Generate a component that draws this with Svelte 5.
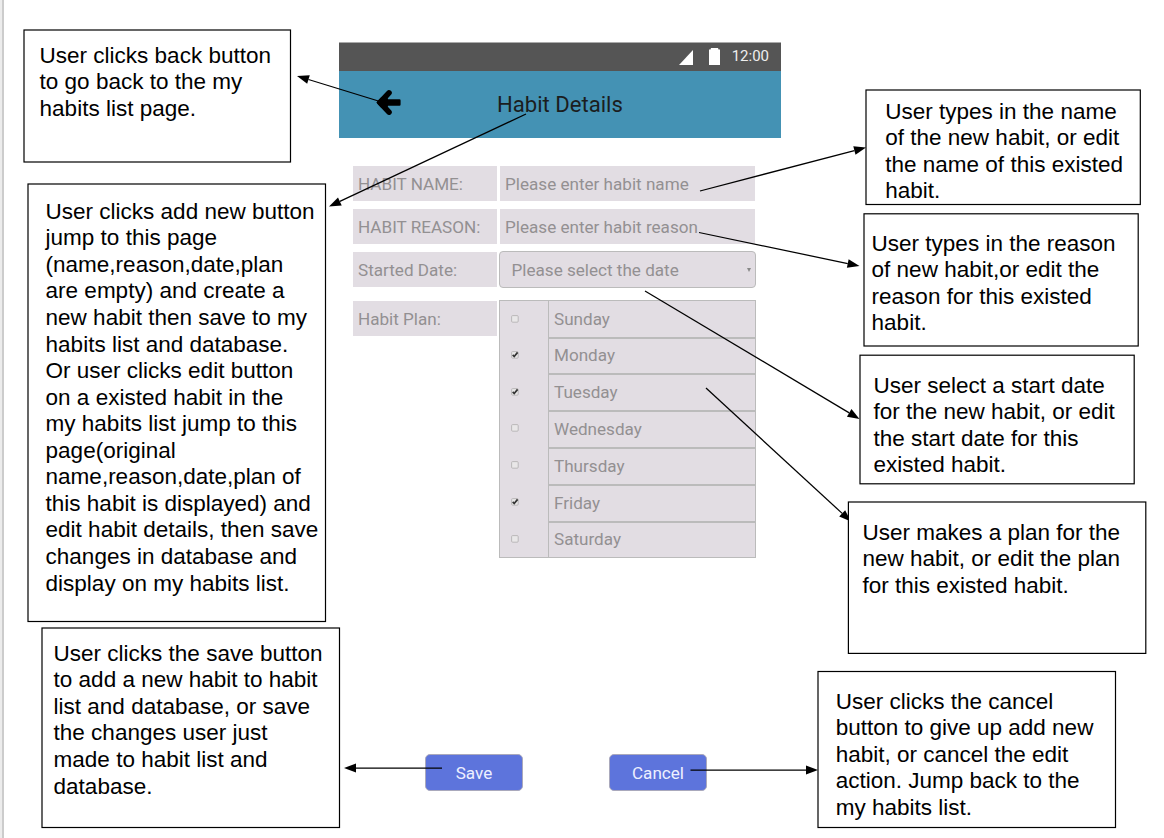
<script>
  const notes = [
    { x: 24, y: 30, w: 266.5, h: 132, tx: 39.6, base: 63, lines: ['User clicks back button', 'to go back to the my', 'habits list page.'] },
    { x: 28, y: 184, w: 297.5, h: 437.5, tx: 45.6, base: 219, lines: ['User clicks add new button', 'jump to this page', '(name,reason,date,plan', 'are empty) and create a', 'new habit then save to my', 'habits list and database.', 'Or user clicks edit button', 'on a existed habit in the', 'my habits list jump to this', 'page(original', 'name,reason,date,plan of', 'this habit is displayed) and', 'edit habit details, then save', 'changes in database and', 'display on my habits list.'] },
    { x: 42, y: 628, w: 297.5, h: 199.5, tx: 53.6, base: 661, lines: ['User clicks the save button', 'to add a new habit to habit', 'list and database, or save', 'the changes user just', 'made to habit list and', 'database.'] },
    { x: 866, y: 90, w: 274.3, h: 114.5, tx: 885.3, base: 119, lines: ['User types in the name', 'of the new habit, or edit', 'the name of this existed', 'habit.'] },
    { x: 864, y: 213.8, w: 274.2, h: 132.2, tx: 871.6, base: 251, lines: ['User types in the reason', 'of new habit,or edit the', 'reason for this existed', 'habit.'] },
    { x: 860, y: 355.2, w: 274.2, h: 128.6, tx: 873.4, base: 393, lines: ['User select a start date', 'for the new habit, or edit', 'the start date for this', 'existed habit.'] },
    { x: 848.4, y: 502, w: 297.4, h: 151.4, tx: 862.4, base: 540, lines: ['User makes a plan for the', 'new habit, or edit the plan', 'for this existed habit.'] },
    { x: 818, y: 671.5, w: 297.5, h: 156, tx: 835.7, base: 709, lines: ['User clicks the cancel', 'button to give up add new', 'habit, or cancel the edit', 'action. Jump back to the', 'my habits list.'] },
  ];

  const arrows = [
    [380, 101.5, 297, 76],
    [526, 114, 329, 206.5],
    [700, 191, 866, 147.5],
    [699, 232.5, 859.5, 266],
    [645, 291, 859.5, 419],
    [706, 388, 851, 521.5],
    [442, 768, 344, 768],
    [690.5, 770, 818, 770],
  ].map(([x1, y1, x2, y2]) => {
    const d = Math.hypot(x2 - x1, y2 - y1);
    const ux = (x2 - x1) / d, uy = (y2 - y1) / d;
    const bx = x2 - ux * 12, by = y2 - uy * 12;
    return { x1, y1, bx, by, head: `${x2},${y2} ${bx - uy * 4.4},${by + ux * 4.4} ${bx + uy * 4.4},${by - ux * 4.4}` };
  });

  const days = [
    ['Sunday', false], ['Monday', true], ['Tuesday', true], ['Wednesday', false],
    ['Thursday', false], ['Friday', true], ['Saturday', false],
  ];
</script>

<main class="canvas">
  <section class="phone">
    <div class="status">
      <svg width="14" height="15" viewBox="0 0 14 15"><path d="M14 0V15H0Z" fill="#fff" /></svg>
      <svg class="battery" width="11" height="17" viewBox="0 0 11 17"><path d="M2 0H9L9.500 1.500H11V17H0V1.500H1.500Z" fill="#fff" /></svg>
      <span>12:00</span>
    </div>
    <header>
      <svg class="back" width="26" height="28" viewBox="0 0 26 28">
        <path d="M14 3.900L5 13.500L14 23.100" fill="none" stroke="#000" stroke-width="5.600" stroke-linecap="round" stroke-linejoin="round" />
        <path d="M6 8.500L1.300 13.500L6 18.500L12 19.500L13 16.700H24.500Q25.600 16.700 25.600 15.500V11.500Q25.600 10.300 24.500 10.300H13L12 7.500Z" />
      </svg>
      <h1>Habit Details</h1>
    </header>
    <div class="form">
      <div class="label">HABIT NAME:</div><div class="input">Please enter habit name</div>
      <div class="label">HABIT REASON:</div><div class="input">Please enter habit reason</div>
      <div class="label">Started Date:</div>
      <div class="select"><span>Please select the date</span><i></i></div>
      <div class="label plan">Habit Plan:</div>
      <div class="table">
        {#each days as [day, on]}
          <div class="row">
            <div class="check">
              <svg width="8" height="8" viewBox="0 0 8 8">
                <rect x=".6" y=".6" width="6.600" height="6.600" rx="1" fill="#e9e7e8" stroke="#b5b3b4" stroke-width=".9" />
                {#if on}<path d="M1.700 3.900L3.200 5.500L6.600 1.400" fill="none" stroke="#333" stroke-width="1.700" />{/if}
              </svg>
            </div>
            <div class="day">{day}</div>
          </div>
        {/each}
      </div>
    </div>
    <div class="actions">
      <div class="button">Save</div>
      <div class="button">Cancel</div>
    </div>
  </section>

  <svg class="overlay" width="1164" height="838" viewBox="0 0 1164 838">
    {#each arrows as a}
      <line x1={a.x1} y1={a.y1} x2={a.bx} y2={a.by} stroke="#000" stroke-width="1.250" />
      <polygon points={a.head} />
    {/each}
    {#each notes as n}
      <rect x={n.x} y={n.y} width={n.w} height={n.h} fill="#fff" stroke="#000" stroke-width="1.200" />
    {/each}
  </svg>

  {#each notes as n}
    <p class="note" style="left:{n.tx}px;top:{n.base - 20.3}px">
      {#each n.lines as line}<span>{line}</span>{/each}
    </p>
  {/each}
</main>

<style>
  :global(body) { margin: 0; background: #fff; }
  .canvas {
    position: relative; box-sizing: border-box; width: 1164px; height: 838px; overflow: hidden;
    border-left: 2px solid #ececec; box-shadow: inset 2px 0 #ccc; background: #fff;
    font-family: Roboto, sans-serif;
  }
  .phone { width: 442px; margin-left: 337px; padding-top: 42px; }
  .status {
    display: flex; align-items: center; justify-content: flex-end; box-sizing: border-box;
    height: 29px; padding-right: 12px; border-top: 1px solid #aaa; background: #555; color: #eee;
    font-size: 15px; line-height: 26px;
  }
  .status .battery { margin: -2px 12px 0 16px; }
  .status span { margin-top: -3px; }
  header { display: flex; align-items: center; height: 67px; background: #4492b4; }
  .back { margin: -4px 0 0 36px; }
  h1 { margin: -1px 0 0 96px; font-size: 22.1px; font-weight: 400; color: #1b1d1e; white-space: nowrap; }
  .form {
    display: grid; grid-template-columns: 144px 257px; column-gap: 2px; align-items: center;
    grid-template-rows: 43px 43px 43px 262px; margin: 24px 0 0 14px;
    color: #939092; font-size: 17.1px;
  }
  .label, .input { box-sizing: border-box; height: 35px; padding-left: 5px; line-height: 36px; background: #e2dde3; white-space: nowrap; }
  .input { margin: 0 1px; }
  .label { width: 144px; }
  .plan { align-self: start; margin-top: 10px; }
  .select {
    display: flex; align-items: center; justify-content: space-between; box-sizing: border-box; height: 37px;
    padding: 0 4px 0 11.5px; border: 1px solid #bbb; border-bottom-width: 1.5px; border-radius: 4px; background: #e2dde3;
  }
  .select i { border: 2px solid transparent; border-top: 4px solid #888; border-bottom: 0; }
  .table {
    display: grid; grid-template-rows: 36.4px repeat(5, 36.8px) 35.6px; align-self: start; box-sizing: border-box;
    margin-top: 9px; height: 258px; border: 1px solid #bbb; background: #e2dde3;
  }
  .row { display: grid; grid-template-columns: 48px 1fr; }
  .check { padding: 13.5px 0 0 11px; line-height: 0; }
  .day { box-sizing: border-box; border-left: 1px solid #bbb; border-bottom: 2px solid #bbb; padding-left: 5px; line-height: 36px; height: 100%; }
  .row:last-child .day { border-bottom: 0; }
  .actions { display: flex; gap: 86px; margin: 201px 0 0 86px; }
  .button {
    box-sizing: border-box; width: 98px; height: 37px; border: 1px solid #aaa9bc; border-radius: 5px;
    background: #5d74dc; color: #edf0ff; font-size: 17.1px; line-height: 36px; text-align: center;
  }
  .overlay { position: absolute; left: -2px; top: 0; }
  .note { position: absolute; margin: 0 0 0 -2px; font: 22.5px/26.57px "Liberation Sans", Arial, sans-serif; color: #000; white-space: nowrap; }
  .note span { display: block; }
</style>
